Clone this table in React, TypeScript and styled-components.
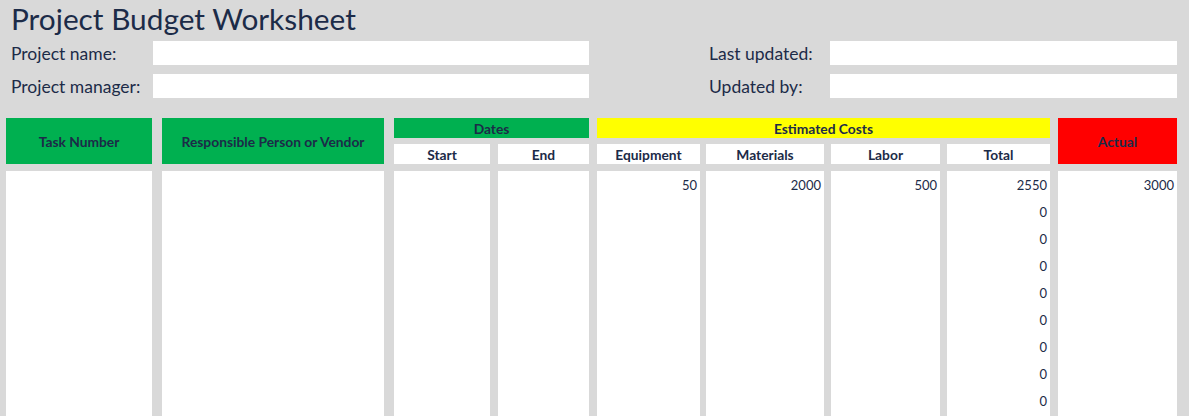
import React from 'react';
import styled, { createGlobalStyle } from 'styled-components';

const GlobalStyle = createGlobalStyle`
  html, body {
    margin: 0;
    padding: 0;
    height: 100%;
    overflow: hidden;
    background: #d9d9d9;
  }
  body {
    font-family: Lato, 'Open Sans', sans-serif;
    color: #1c2b48;
  }
`;

const Page = styled.div`
  width: 1189px;
  height: 416px;
  overflow: hidden;
  background: #d9d9d9;
`;

const Title = styled.h1`
  margin: 0;
  padding: 1px 0 0 11px;
  height: 38px;
  font-size: 29.8px;
  font-weight: 400;
  line-height: 35px;
  color: #1c2b48;
`;

const InfoGrid = styled.div`
  display: grid;
  grid-template-columns: 142px 436px 1fr 121px 347px;
  grid-auto-rows: 24px;
  row-gap: 9px;
  padding: 2px 12px 0 11px;
`;

const InfoLabel = styled.div<{ $col: number }>`
  grid-column: ${p => p.$col};
  font-size: 17.5px;
  line-height: 25px;
`;

const InfoField = styled.div<{ $col: number }>`
  grid-column: ${p => p.$col};
  background: #fff;
`;

const Sheet = styled.div`
  display: grid;
  grid-template-columns:
    146px 10px 222px 10px 96px 8px 91px 8px 103px 6px
    118px 7px 109px 7px 103px 8px 119px;
  grid-template-rows: 20px 6px 20px 7px auto;
  margin-top: 20px;
  padding-left: 6px;
`;

const HeadCell = styled.div<{ $col: string; $row: string; $bg: string }>`
  grid-column: ${p => p.$col};
  grid-row: ${p => p.$row};
  background: ${p => p.$bg};
  display: flex;
  align-items: center;
  justify-content: center;
  font-size: 13.8px;
  font-weight: 700;
  color: #1c2b48;
`;

const DataColumn = styled.div<{ $col: number }>`
  grid-column: ${p => p.$col};
  grid-row: 5;
  background: #fff;
  min-height: 260px;
`;

const DataRow = styled.div`
  height: 27px;
  padding-right: 3px;
  text-align: right;
  font-size: 13px;
  line-height: 28px;
  color: #1c2b48;
`;

const green = '#00b050';
const white = '#ffffff';

const columns: { col: number; values: string[] }[] = [
  { col: 1, values: [] },
  { col: 3, values: [] },
  { col: 5, values: [] },
  { col: 7, values: [] },
  { col: 9, values: ['50'] },
  { col: 11, values: ['2000'] },
  { col: 13, values: ['500'] },
  { col: 15, values: ['2550', '0', '0', '0', '0', '0', '0', '0', '0'] },
  { col: 17, values: ['3000'] },
];

const App = () => {
  return (
    <Page>
      <GlobalStyle />
      <Title>Project Budget Worksheet</Title>

      <InfoGrid>
        <InfoLabel $col={1}>Project name:</InfoLabel>
        <InfoField $col={2} />
        <InfoLabel $col={4}>Last updated:</InfoLabel>
        <InfoField $col={5} />
        <InfoLabel $col={1}>Project manager:</InfoLabel>
        <InfoField $col={2} />
        <InfoLabel $col={4}>Updated by:</InfoLabel>
        <InfoField $col={5} />
      </InfoGrid>

      <Sheet>
        <HeadCell $col="1" $row="1 / 4" $bg={green}>Task Number</HeadCell>
        <HeadCell $col="3" $row="1 / 4" $bg={green}>Responsible Person or Vendor</HeadCell>
        <HeadCell $col="5 / 8" $row="1" $bg={green}>Dates</HeadCell>
        <HeadCell $col="5" $row="3" $bg={white}>Start</HeadCell>
        <HeadCell $col="7" $row="3" $bg={white}>End</HeadCell>
        <HeadCell $col="9 / 16" $row="1" $bg="#ffff00">Estimated Costs</HeadCell>
        <HeadCell $col="9" $row="3" $bg={white}>Equipment</HeadCell>
        <HeadCell $col="11" $row="3" $bg={white}>Materials</HeadCell>
        <HeadCell $col="13" $row="3" $bg={white}>Labor</HeadCell>
        <HeadCell $col="15" $row="3" $bg={white}>Total</HeadCell>
        <HeadCell $col="17" $row="1 / 4" $bg="#ff0000">Actual</HeadCell>

        {columns.map(c => (
          <DataColumn key={c.col} $col={c.col}>
            {c.values.map((v, i) => (
              <DataRow key={i}>{v}</DataRow>
            ))}
          </DataColumn>
        ))}
      </Sheet>
    </Page>
  );
};

export default App;
